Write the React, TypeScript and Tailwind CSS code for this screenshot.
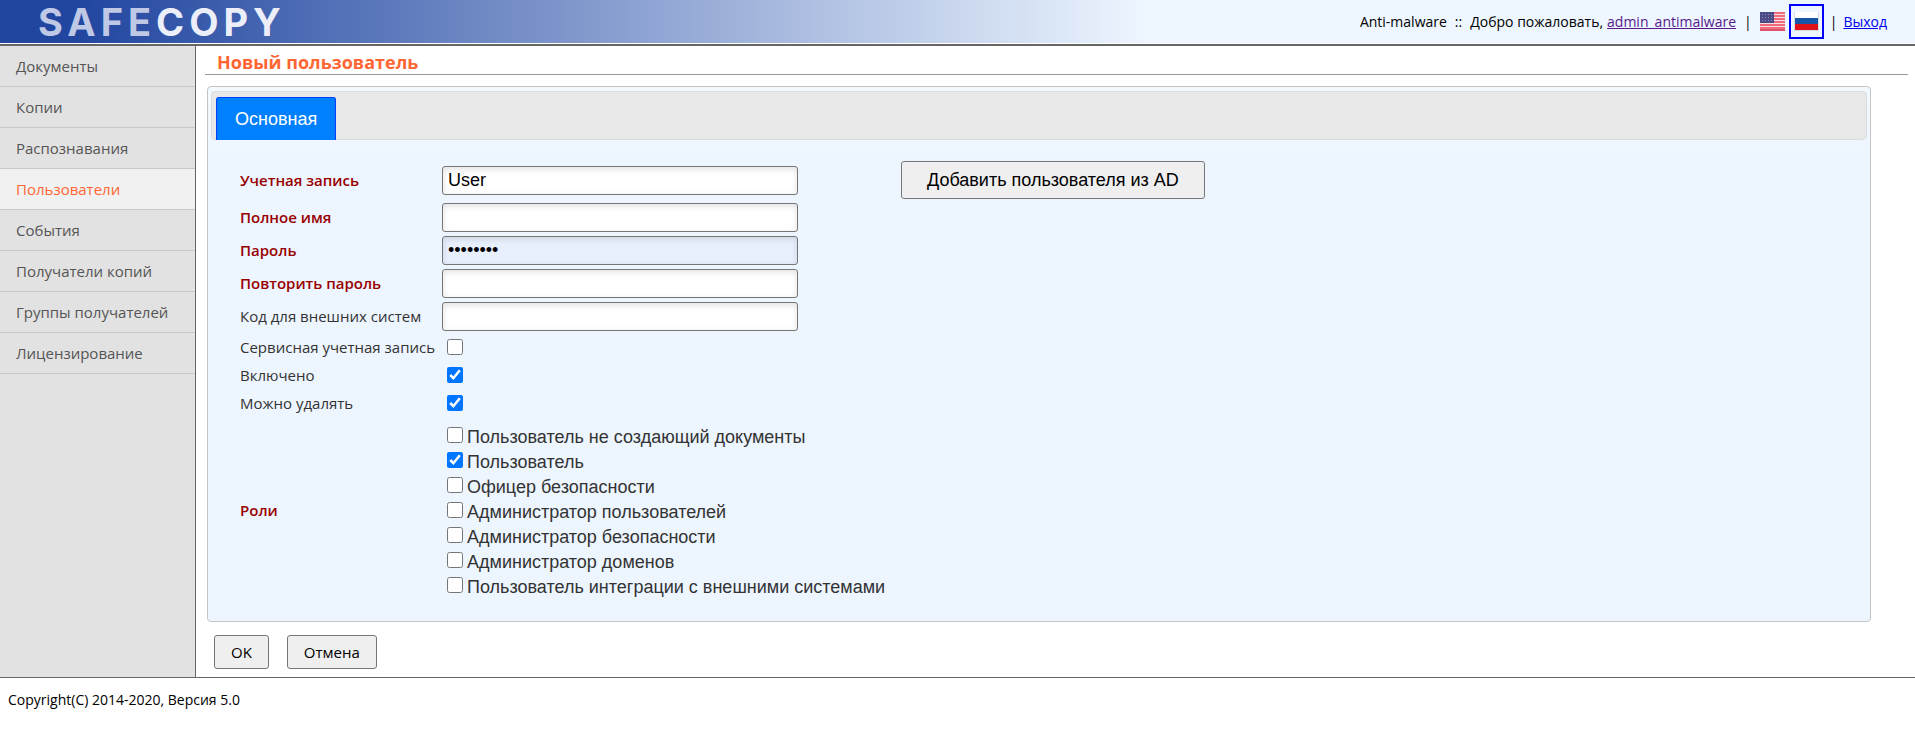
import { useState } from 'react';
import clsx from 'clsx';

type Field = {
  id: string;
  label: string;
  type: 'text' | 'password';
  required: boolean;
};

const MENU = [
  'Документы',
  'Копии',
  'Распознавания',
  'Пользователи',
  'События',
  'Получатели копий',
  'Группы получателей',
  'Лицензирование',
];

const FIELDS: Field[] = [
  { id: 'fullName', label: 'Полное имя', type: 'text', required: true },
  { id: 'password', label: 'Пароль', type: 'password', required: true },
  { id: 'passwordRepeat', label: 'Повторить пароль', type: 'password', required: true },
  { id: 'externalCode', label: 'Код для внешних систем', type: 'text', required: false },
];

const FLAGS = [
  { id: 'service', label: 'Сервисная учетная запись', checked: false },
  { id: 'enabled', label: 'Включено', checked: true },
  { id: 'deletable', label: 'Можно удалять', checked: true },
];

const ROLES = [
  'Пользователь не создающий документы',
  'Пользователь',
  'Офицер безопасности',
  'Администратор пользователей',
  'Администратор безопасности',
  'Администратор доменов',
  'Пользователь интеграции с внешними системами',
];

const inputClass =
  "h-[29px] w-[356px] rounded-[3px] border border-[#767676] px-[5px] font-['Liberation_Sans',sans-serif] text-lg leading-none text-black shadow-[inset_0_2px_6px_rgba(0,0,0,0.12)]";

const buttonClass =
  'h-[34px] rounded-[3px] border border-[#767676] bg-[#efefef] px-4 text-[15px] text-black';

function FlagUS() {
  return (
    <svg width="25" height="19" viewBox="0 0 25 19">
      <rect width="25" height="19" fill="#f7dfe3" />
      {[0, 3, 6, 9, 12, 15].map((y) => (
        <rect key={y} y={y} width="25" height="2" fill="#ef6b7c" />
      ))}
      <rect y="17" width="25" height="2" fill="#e2506a" />
      <rect width="14" height="11" fill="#4b4a86" />
      {[2, 5, 8].map((y) =>
        [2, 5, 8, 11].map((x) => (
          <rect key={`${x}-${y}`} x={x} y={y} width="1" height="1" fill="#8d8db8" />
        ))
      )}
    </svg>
  );
}

function FlagRU() {
  return (
    <svg width="25" height="19" viewBox="0 0 25 19">
      <rect width="25" height="19" fill="#d8dce4" />
      <rect x="1" width="23" height="6" fill="#ffffff" />
      <rect x="1" y="6" width="23" height="6" fill="#1556a6" />
      <rect x="1" y="12" width="23" height="6" fill="#e01119" />
    </svg>
  );
}

function Header() {
  return (
    <header className="border-b-2 border-[#666666] pb-px">
      <div className="flex h-[43px] items-center justify-between bg-linear-[90deg,#2146a0_0%,#2146a0_4%,#eef6ff_60%,#eef6ff_100%] pr-[28px] pl-[38px]">
        <div className="font-['Inter',sans-serif] text-[38px] leading-none font-bold tracking-[5px] text-[#eceffa]">
          <span className="text-[#bfc8e4]">SAFE</span>COPY
        </div>

        <div className="flex items-center text-sm text-black">
          <span className="mr-2">Anti-malware</span>
          <span className="mr-2">::</span>
          <span className="mr-1">Добро пожаловать,</span>
          <a href="#profile" className="text-[#551a8b] underline">admin_antimalware</a>
          <span className="mx-2">|</span>
          <a href="#en" aria-label="English"><FlagUS /></a>
          <a href="#ru" aria-label="Русский" className="ml-1 border-2 border-[#0000ff] px-[3px] py-1.5"><FlagRU /></a>
          <span className="mx-1.5">|</span>
          <a href="#logout" className="text-[#0000ee] underline">Выход</a>
        </div>
      </div>
    </header>
  );
}

function Sidebar() {
  return (
    <nav className="w-[196px] shrink-0 border-r border-[#666666] bg-[#e2e2e2]">
      <ul>
        {MENU.map((item) => (
          <li key={item} className="border-b border-[#c8c8c8]">
            <a
              href="#menu"
              className={clsx(
                'block h-10 px-4 text-[15px] leading-10',
                item === 'Пользователи' ? 'bg-[#f1f1f1] text-[#ff6633]' : 'text-[#555555]'
              )}
            >
              {item}
            </a>
          </li>
        ))}
      </ul>
    </nav>
  );
}

export default function App() {
  const [values, setValues] = useState<Record<string, string>>({ login: 'User', password: 'password' });
  const [flags, setFlags] = useState<string[]>(FLAGS.filter((f) => f.checked).map((f) => f.id));
  const [roles, setRoles] = useState<string[]>(['Пользователь']);

  const setValue = (id: string, value: string) => setValues({ ...values, [id]: value });

  const toggle = (list: string[], item: string) =>
    list.includes(item) ? list.filter((i) => i !== item) : [...list, item];

  return (
    <div className="min-h-screen bg-white font-['Open_Sans',sans-serif]">
      <Header />

      <div className="flex border-b border-[#666666]">
        <Sidebar />

        <main className="flex-1 pb-2">
          <h1 className="mr-[7px] ml-[9px] h-[29px] border-b border-[#999999] pt-1 pl-3 text-lg leading-6 font-bold text-[#ff6633]">
            Новый пользователь
          </h1>

          <form onSubmit={(e) => e.preventDefault()}>
            <div className="mt-[11px] mr-11 ml-[11px] rounded border border-[#c5c5c5] bg-[#edf5ff] bg-linear-[180deg,#f2f9ff_0px,#edf5ff_72px] px-[3px] pt-1 pb-[18px]">
              <div className="flex h-[49px] items-end rounded border border-[#dddddd] bg-[#e8e8e8] px-1">
                <button
                  type="button"
                  className="-mb-px h-[43px] rounded-t-[3px] border border-b-0 border-[#003eff] bg-[#007fff] px-[18px] font-['Liberation_Sans',sans-serif] text-lg text-white"
                >
                  Основная
                </button>
              </div>

              <div className="flex flex-col gap-0.5 pt-5 pl-[29px] text-[15px] text-[#333333]">
                <div className="flex h-10 items-center">
                  <label htmlFor="login" className="w-[202px] font-semibold text-[#990000]">Учетная запись</label>
                  <input
                    id="login"
                    type="text"
                    value={values.login}
                    onChange={(e) => setValue('login', e.target.value)}
                    className={clsx(inputClass, 'bg-white')}
                  />
                  <button
                    type="button"
                    className="ml-[103px] h-[38px] rounded-[3px] border border-[#767676] bg-[#efefef] px-[25px] font-['Liberation_Sans',sans-serif] text-lg text-black"
                  >
                    Добавить пользователя из AD
                  </button>
                </div>

                {FIELDS.map((field) => (
                  <div key={field.id} className="flex h-[31px] items-center">
                    <label
                      htmlFor={field.id}
                      className={clsx('w-[202px]', field.required && 'font-semibold text-[#990000]')}
                    >
                      {field.label}
                    </label>
                    <input
                      id={field.id}
                      type={field.type}
                      value={values[field.id] ?? ''}
                      onChange={(e) => setValue(field.id, e.target.value)}
                      className={clsx(inputClass, values[field.id] ? 'bg-[#e8f0fe]' : 'bg-white')}
                    />
                  </div>
                ))}

                {FLAGS.map((flag) => (
                  <div key={flag.id} className="flex h-[26px] items-center">
                    <label htmlFor={flag.id} className="w-[207px]">{flag.label}</label>
                    <input
                      id={flag.id}
                      type="checkbox"
                      checked={flags.includes(flag.id)}
                      onChange={() => setFlags(toggle(flags, flag.id))}
                      className="size-4"
                    />
                  </div>
                ))}

                <div className="flex items-center" role="group" aria-labelledby="roles-title">
                  <span id="roles-title" className="w-[207px] font-semibold text-[#990000]">Роли</span>
                  <ul className="pt-1.5 pb-1 font-['Liberation_Sans',sans-serif] text-lg">
                    {ROLES.map((role) => (
                      <li key={role}>
                        <label className="flex h-[25px] items-start gap-1 leading-[26px]">
                          <input
                            type="checkbox"
                            checked={roles.includes(role)}
                            onChange={() => setRoles(toggle(roles, role))}
                            className="mt-[3px] size-4"
                          />
                          {role}
                        </label>
                      </li>
                    ))}
                  </ul>
                </div>
              </div>
            </div>

            <div className="mt-[13px] ml-[18px] flex gap-[18px]">
              <button type="submit" className={buttonClass}>OK</button>
              <button type="button" className={buttonClass}>Отмена</button>
            </div>
          </form>
        </main>
      </div>

      <footer className="px-2 pt-3 text-sm text-black">Copyright(C) 2014-2020, Версия 5.0</footer>
    </div>
  );
}
